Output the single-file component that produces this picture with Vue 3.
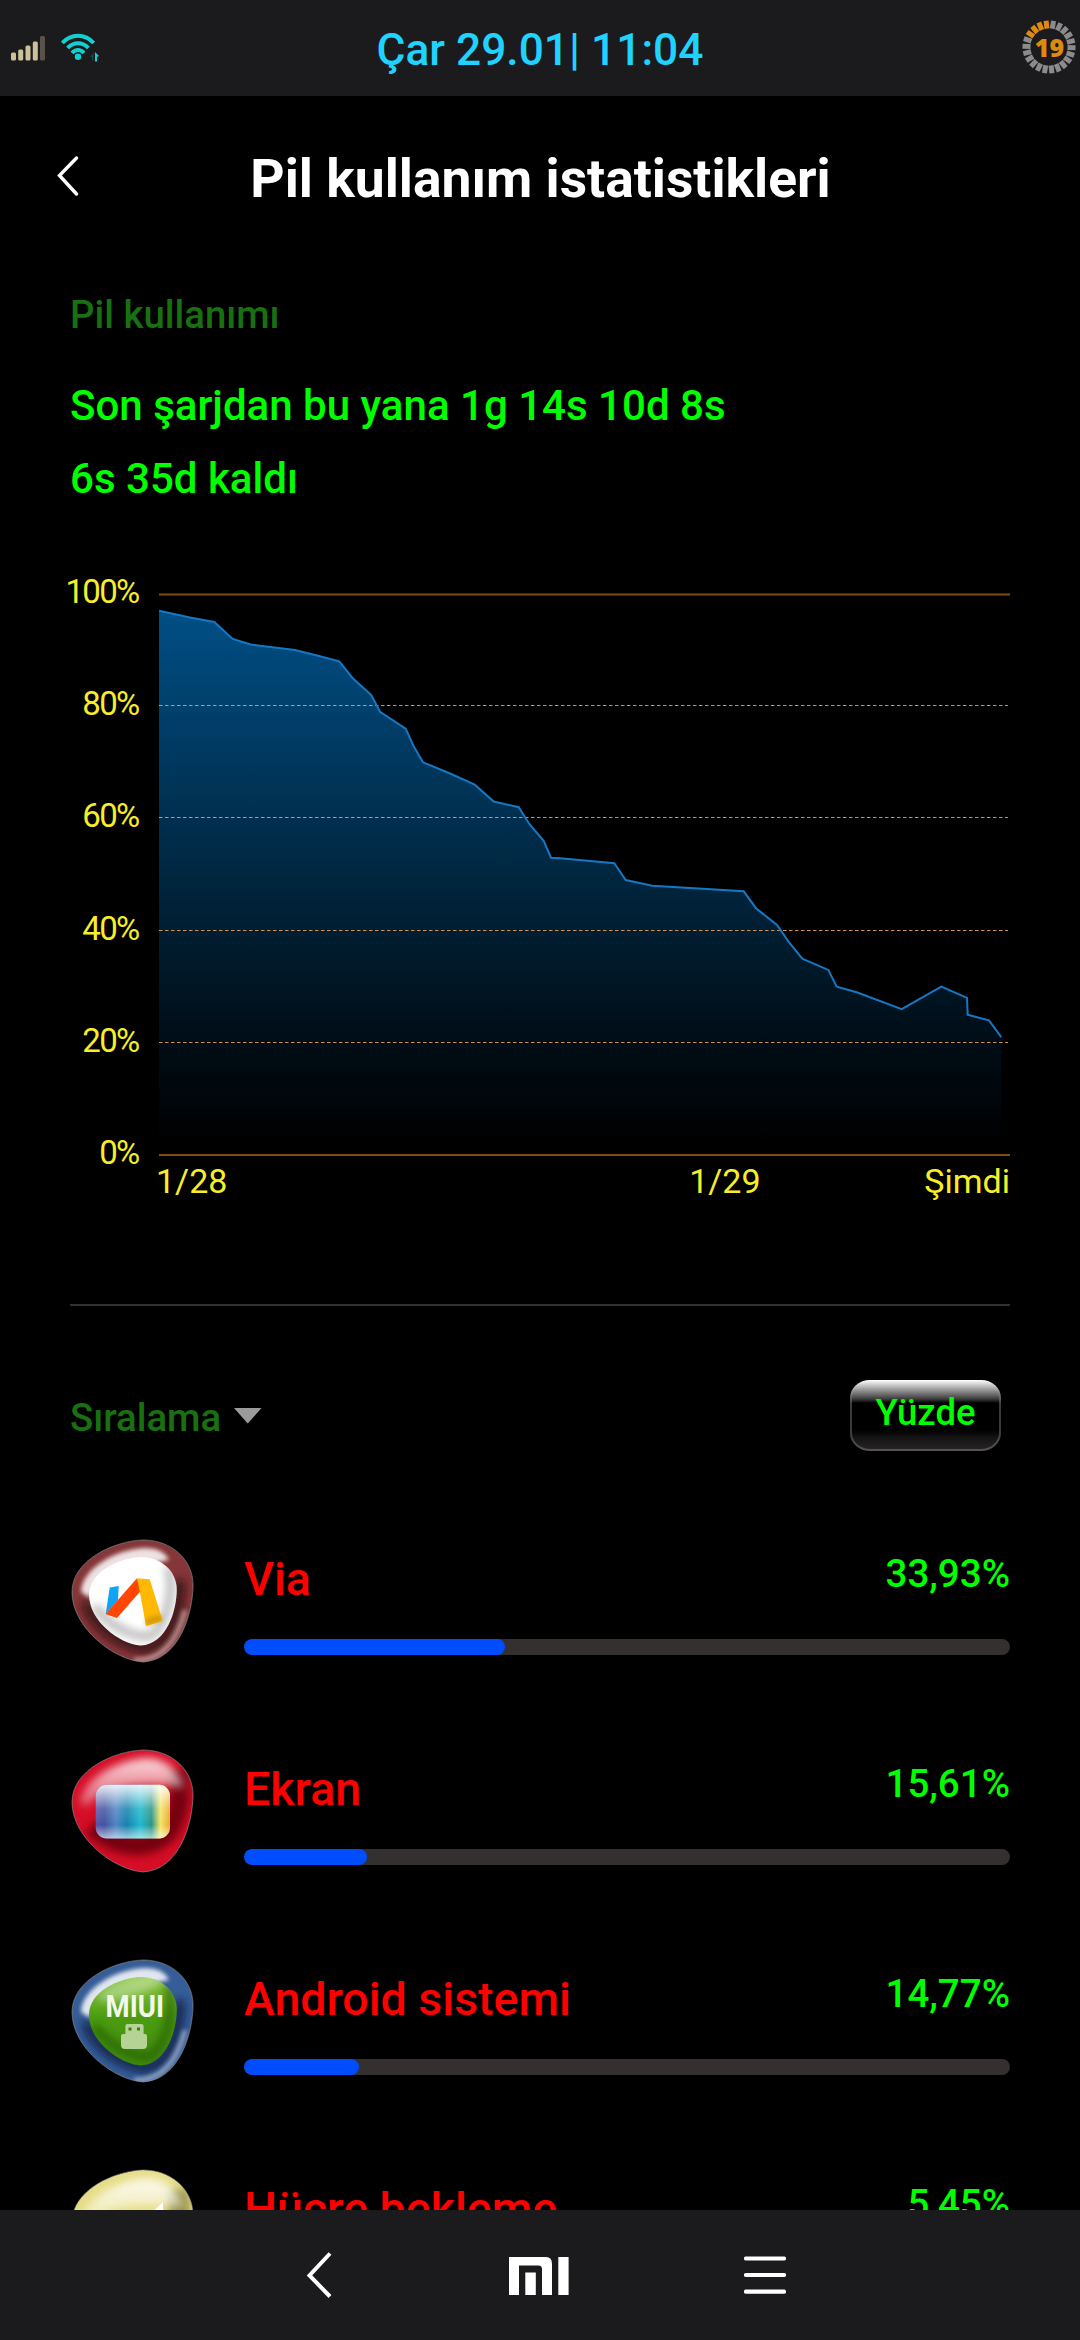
<script setup>
const ticks = Array.from({ length: 22 }, (_, i) => ({
  angle: 10 + (i * 360) / 22,
  on: i >= 18 && i <= 21,
}))

const yLabels = ['100%', '80%', '60%', '40%', '20%', '0%']
const gridLines = [80, 60, 40, 20]

// [x inside the plot, battery level in percent]
const levels = [
  [0, 97], [31, 95.8], [55.3, 95], [73.7, 92], [91.7, 91], [136, 90], [159, 89], [180.3, 88],
  [193.7, 85], [212.3, 82], [221, 79], [246.7, 76], [254.3, 73], [264, 70], [291, 68],
  [315.7, 66], [334.7, 63], [359.7, 62], [370.3, 59], [384.7, 56], [392, 53], [401, 52.9],
  [455.3, 52], [466.7, 49], [493.3, 48], [584.7, 47], [597, 44], [618, 41], [629.7, 38],
  [643.3, 35], [669.3, 33], [677.7, 30], [697.7, 29], [742.7, 26], [782.3, 30], [808, 28],
  [808.7, 25], [830, 24], [842.3, 21],
]
const yOf = (p) => 4 + (100 - p) * 5.61
const line = levels.map(([x, p]) => `${x},${yOf(p).toFixed(1)}`).join(' ')
const area = `0,565 ${line} 842.3,565`

const blob =
  'M71 0C100 0 121 20 121 45C121 72 108 120 71 122C42 120 0 88 0 52C0 20 42 1 71 0Z'

const apps = [
  { id: 'via', name: 'Via', share: '33,93%', fill: 34.1 },
  { id: 'screen', name: 'Ekran', share: '15,61%', fill: 16.1 },
  { id: 'android', name: 'Android sistemi', share: '14,77%', fill: 15 },
  { id: 'cell', name: 'Hücre bekleme', share: '5,45%', fill: 5.5 },
]
</script>

<template>
  <div class="screen">
    <header class="status">
      <div class="status-left">
        <svg class="signal" width="34" height="26" viewBox="0 0 34 26">
          <g fill="#cfc09c">
            <rect x="0" y="17.5" width="5" height="8" rx="1.5" />
            <rect x="7.2" y="14.5" width="5" height="11" rx="1.5" />
            <rect x="14.5" y="10.5" width="5" height="15" rx="1.5" />
            <rect x="21.8" y="6.5" width="5" height="19" rx="1.5" />
          </g>
          <rect x="29" y="1" width="5" height="24.5" rx="1.5" fill="#5a5148" />
        </svg>
        <svg class="wifi" width="40" height="30" viewBox="0 0 40 30">
          <g fill="none" stroke="#14cfd0" stroke-width="4">
            <path d="M1.3 10C10 .3 24 .3 32.7 10" />
            <path d="M6.600 15C12.500 8.500 21.500 8.500 27.400 15" />
            <path d="M11 20C14.600 16 19.400 16 23 20" />
          </g>
          <circle cx="17" cy="23.700" r="3.200" fill="#14cfd0" />
          <path d="M34 19v9.500h2v-4.500l2-1-2-2z" fill="#14cfd0" />
          <path d="M32.500 19v8.500h-1.500v-3l-2-1 2-1.500z" fill="#15474b" />
        </svg>
      </div>
      <div class="clock">Çar 29.01| 11:04</div>
      <svg class="battery" width="56" height="56" viewBox="-28 -28 56 56">
        <rect
          v-for="t in ticks"
          :key="t.angle"
          x="-2.500"
          y="-26.500"
          width="5"
          height="8"
          :fill="t.on ? '#de8a10' : '#8b8b8b'"
          :transform="`rotate(${t.angle})`"
        />
        <text x="0.500" y="9.500" text-anchor="middle" class="battery-text">19</text>
      </svg>
    </header>

    <div class="title-bar">
      <svg class="back" width="24" height="42" viewBox="0 0 24 42">
        <path d="M20.500 3L3.500 20.500L20.500 39" fill="none" stroke="#fff" stroke-width="3.400" stroke-linecap="round" />
      </svg>
      <h1>Pil kullanım istatistikleri</h1>
    </div>

    <main class="content">
      <section class="summary">
        <div class="caption">Pil kullanımı</div>
        <div class="fact">Son şarjdan bu yana 1g 14s 10d 8s</div>
        <div class="fact">6s 35d kaldı</div>
      </section>

      <section class="chart">
        <div class="y-axis">
          <span v-for="l in yLabels" :key="l">{{ l }}</span>
        </div>
        <div class="plot">
          <svg width="851" height="570" viewBox="0 0 851 570">
            <defs>
              <linearGradient id="areaFill" gradientUnits="userSpaceOnUse" x1="0" y1="20" x2="0" y2="555">
                <stop offset="0" stop-color="#004f86" />
                <stop offset="0.500" stop-color="#00263f" />
                <stop offset="0.780" stop-color="#000f1a" />
                <stop offset="1" stop-color="#000" />
              </linearGradient>
            </defs>
            <polygon :points="area" fill="url(#areaFill)" />
            <path d="M0 4.500H851M0 565H851" stroke="#7a4f1c" stroke-width="2" />
            <path
              v-for="g in gridLines"
              :key="g"
              :d="`M0 ${Math.round(yOf(g)) - 0.5}H849`"
              stroke="#e8a050"
              stroke-opacity="0.900"
              stroke-width="1"
              stroke-dasharray="3.500 2.500"
            />
            <polyline :points="line" fill="none" stroke="#1478c4" stroke-width="2" />
          </svg>
          <div class="x-axis">
            <span>1/28</span>
            <span class="mid">1/29</span>
            <span>Şimdi</span>
          </div>
        </div>
      </section>

      <div class="divider"></div>

      <section class="sort">
        <span class="caption">Sıralama</span>
        <svg class="caret" width="28" height="16" viewBox="0 0 28 16">
          <path d="M0 0H27.500L13.700 15.500Z" fill="#9b9b9b" />
        </svg>
        <button class="mode">Yüzde</button>
      </section>

      <section class="apps">
        <article v-for="a in apps" :key="a.id" class="app">
          <svg class="icon" width="122" height="122" viewBox="0 0 122 122">
            <defs>
              <filter id="soft4" x="-30%" y="-30%" width="160%" height="160%"><feGaussianBlur stdDeviation="4" /></filter>
              <filter id="soft2" x="-30%" y="-30%" width="160%" height="160%"><feGaussianBlur stdDeviation="2" /></filter>
              <clipPath id="blobClip"><path :d="blob" /></clipPath>
              <clipPath id="innerClip"><path :d="blob" transform="translate(17 17) scale(.725)" /></clipPath>
              <linearGradient id="spectrum">
                <stop offset="0" stop-color="#5a52a8" />
                <stop offset="0.120" stop-color="#41549e" />
                <stop offset="0.270" stop-color="#4f83c4" />
                <stop offset="0.420" stop-color="#1482ae" />
                <stop offset="0.600" stop-color="#20b8cf" />
                <stop offset="0.750" stop-color="#2c9488" />
                <stop offset="0.870" stop-color="#f1e768" />
                <stop offset="1" stop-color="#f0a52c" />
              </linearGradient>
              <linearGradient id="gloss" x2="0" y2="1">
                <stop offset="0" stop-color="#fff" stop-opacity="0.900" />
                <stop offset="0.450" stop-color="#fff" stop-opacity="0.150" />
                <stop offset="0.750" stop-color="#fff" stop-opacity="0" />
                <stop offset="1" stop-color="#fff" stop-opacity="0.600" />
              </linearGradient>
              <linearGradient id="shine" x2="0" y2="1">
                <stop offset="0" stop-color="#fff" stop-opacity="0.850" />
                <stop offset="1" stop-color="#fff" stop-opacity="0.300" />
              </linearGradient>
              <linearGradient id="green" x2="0" y2="1">
                <stop offset="0" stop-color="#8fc846" />
                <stop offset="0.450" stop-color="#4c9c10" />
                <stop offset="1" stop-color="#3f8a0c" />
              </linearGradient>
            </defs>

            <!-- ringed icons: coloured rim around an inner pebble -->
            <g v-if="a.id === 'via' || a.id === 'android'" clip-path="url(#blobClip)">
              <path :d="blob" :fill="a.id === 'via' ? '#853639' : '#365d98'" />
              <path
                d="M108 40C108 70 98 106 72 108C46 104 20 84 14 62"
                fill="none"
                :stroke="a.id === 'via' ? '#2c0d0f' : '#0b1d40'"
                stroke-width="10"
                opacity="0.850"
                filter="url(#soft4)"
              />
              <path d="M9 52C10 28 45 9 72 8C86 8 93 12 97 20L78 24C48 24 24 34 18 58Z" fill="#fff" opacity="0.850" filter="url(#soft2)" />
              <path d="M62 120C92 122 106 96 113 70" fill="none" stroke="#fff" stroke-width="5" opacity="0.450" filter="url(#soft2)" />
              <path :d="blob" transform="translate(17 17) scale(.725)" :fill="a.id === 'via' ? '#fff' : 'url(#green)'" />
              <g clip-path="url(#innerClip)">
                <path
                  d="M96 26C102 45 98 76 82 94C70 101 40 90 22 66"
                  fill="none"
                  :stroke="a.id === 'via' ? '#9a9a9a' : '#235c06'"
                  stroke-width="8"
                  :opacity="a.id === 'via' ? 0.7 : 0.75"
                  filter="url(#soft4)"
                />
                <ellipse
                  v-if="a.id === 'android'"
                  cx="58"
                  cy="28"
                  rx="34"
                  ry="9"
                  transform="rotate(-18 58 28)"
                  fill="#fff"
                  opacity="0.350"
                  filter="url(#soft4)"
                />
              </g>
            </g>

            <!-- solid glossy icons -->
            <g v-else clip-path="url(#blobClip)">
              <path :d="blob" :fill="a.id === 'screen' ? '#d60d27' : '#e6dc84'" />
              <path
                d="M20 76C44 98 76 102 96 82C106 66 110 50 106 20"
                fill="none"
                :stroke="a.id === 'screen' ? '#6c0610' : '#8a8340'"
                stroke-width="20"
                opacity="0.900"
                filter="url(#soft4)"
              />
              <path
                d="M8 54C10 30 44 10 74 8C92 8 106 18 112 38C84 32 30 34 16 56Z"
                fill="url(#shine)"
                filter="url(#soft4)"
              />
            </g>
            <path :d="blob" fill="none" stroke="#a9a9a9" stroke-opacity="0.550" stroke-width="1" />

            <g v-if="a.id === 'via'">
              <path d="M37.700 47.500L46.700 46L46 60L33.700 74Z" fill="#0fa4f4" />
              <path d="M65 38.300L69.500 50L45 78L33.500 74Z" fill="#ff4605" />
              <path d="M65 38.300L77.700 39.300L90.700 81L74 86L67.500 50Z" fill="#ffb905" />
              <path d="M90.700 81L74 86L73 79L88.500 74Z" fill="#a67802" opacity="0.450" filter="url(#soft2)" />
            </g>
            <g v-if="a.id === 'screen'">
              <rect x="23.700" y="34.700" width="74.300" height="53.700" rx="11" fill="url(#spectrum)" />
              <rect x="23.700" y="34.700" width="74.300" height="53.700" rx="11" fill="url(#gloss)" />
            </g>
            <g v-if="a.id === 'android'">
              <text x="33.500" y="56.700" textLength="58.500" lengthAdjust="spacingAndGlyphs" class="miui">MIUI</text>
              <path
                d="M55.500 64H69.500Q71.600 64 71.600 66V74H73Q75 74 75 76V85Q75 89 71 89H53Q49 89 49 85V76Q49 74 51 74H53.400V66Q53.400 64 55.500 64Z"
                fill="#b4d394"
              />
              <path d="M56.500 67.500h3v3h-3zM65 67.500h3v3h-3z" fill="#3d7a16" />
            </g>
            <path v-if="a.id === 'cell'" d="M91 32L76 46L91 60Z" fill="#fff" />
          </svg>
          <div class="info">
            <div class="row">
              <span class="name">{{ a.name }}</span>
              <span class="share">{{ a.share }}</span>
            </div>
            <div class="track"><div class="fill" :style="{ width: a.fill + '%' }"></div></div>
          </div>
        </article>
      </section>
    </main>

    <nav class="nav">
      <svg class="nav-back" width="27" height="48" viewBox="0 0 27 48">
        <path d="M24 2.500L3.500 24.500L24 45.500" fill="none" stroke="#fff" stroke-width="4" />
      </svg>
      <svg class="nav-mi" width="60" height="38" viewBox="0 0 60 38">
        <path d="M0 0H37Q43 0 43 7V38H33V12Q33 8.500 29.500 8.500H10V38H0Z" fill="#fff" />
        <path d="M16.300 15.500H26.800V38H16.300ZM49.300 0H59.600V38H49.300Z" fill="#fff" />
      </svg>
      <svg width="42" height="40" viewBox="0 0 42 40">
        <path d="M2 3.500H40M2 20H40M2 36.700H40" stroke="#fff" stroke-width="4.200" stroke-linecap="round" />
      </svg>
    </nav>
  </div>
</template>

<style>
body {
  background: #000;
}
</style>

<style scoped>
.screen {
  width: 1080px;
  height: 2340px;
  display: flex;
  flex-direction: column;
  overflow: hidden;
  background: #000;
  font-family: Roboto, sans-serif;
  font-weight: 500;
}
.status {
  height: 96px;
  flex: none;
  display: grid;
  grid-template-columns: 1fr auto 1fr;
  background: #1b1b1d;
}
.status-left {
  display: flex;
  align-items: flex-start;
  padding-left: 11px;
}
.signal {
  margin-top: 35px;
}
.wifi {
  margin: 33px 0 0 16px;
}
.clock {
  color: #1fd2ff;
  font-size: 44.300px;
  line-height: 100px;
}
.battery {
  justify-self: end;
  margin: 19px 3px 0 0;
}
.battery-text {
  font: 800 25px 'Open Sans', sans-serif;
  fill: #de8a10;
}
.title-bar {
  height: 164px;
  flex: none;
  display: grid;
  grid-template-columns: 80px 1fr 80px;
}
.back {
  margin: 59px 0 0 56px;
}
h1 {
  margin: 0;
  padding-left: 1px;
  text-align: center;
  color: #fff;
  font-size: 53.400px;
  font-weight: 700;
  line-height: 166px;
}
.content {
  flex: 1;
  min-height: 0;
  overflow: hidden;
  padding: 0 70px;
}
.summary {
  padding-top: 30px;
}
.caption {
  color: #197011;
  font-size: 38.300px;
  line-height: 50px;
}
.fact {
  color: #00ff00;
  font-size: 42.050px;
  line-height: 73px;
}
.summary .caption {
  margin-bottom: 29px;
}
.chart {
  display: flex;
  margin-top: 57px;
  color: #f8ee28;
  font-size: 33px;
  font-weight: 400;
  line-height: 40px;
}
.y-axis {
  width: 68.500px;
  height: 601px;
  display: flex;
  flex-direction: column;
  justify-content: space-between;
  align-items: flex-end;
  letter-spacing: -1.700px;
}
.plot {
  width: 851px;
  margin: 18px 0 0 20.500px;
}
.plot svg {
  display: block;
}
.x-axis {
  display: flex;
  justify-content: space-between;
  margin: 1px 0 0 -3px;
  font-size: 34px;
}
.x-axis .mid {
  margin-left: 298px;
}
.divider {
  height: 2px;
  margin-top: 103px;
  background: #343131;
}
.sort {
  height: 190px;
  display: flex;
  align-items: flex-start;
}
.sort .caption {
  margin-top: 87px;
}
.caret {
  margin: 102px 0 0 13px;
}
.mode {
  box-sizing: border-box;
  width: 151px;
  height: 71px;
  margin: 74px 9px 0 auto;
  padding: 0 0 6px;
  border: 2px solid transparent;
  border-radius: 20px / 18px;
  background:
    linear-gradient(#e9e9e9 0, #8d8d8d 9px, #3c3c3c 17px, #000 21px, #000 48px, #151516 56px, #262323 100%) padding-box,
    linear-gradient(#fff 0, #8a8a8a 12px, #3a3a3a 24px, #3a3a3a 50px, #555353 100%) border-box;
  color: #00ff00;
  font: 500 36.500px Roboto, sans-serif;
}
.app {
  height: 210px;
  display: flex;
  align-items: flex-start;
}
.icon {
  flex: none;
  margin: 44px 50px 0 2px;
  overflow: visible;
}
.info {
  flex: 1;
  padding-top: 53px;
}
.row {
  display: flex;
  justify-content: space-between;
  line-height: 60px;
}
.name {
  color: #ff0000;
  font-size: 46.500px;
}
.share {
  margin-top: -5px;
  color: #00ff00;
  font-size: 38.500px;
}
.track {
  height: 16px;
  margin-top: 30px;
  border-radius: 8px;
  background: #343030;
  overflow: hidden;
}
.fill {
  height: 100%;
  border-radius: 8px;
  background: #004dff;
}
.miui {
  font: 700 31.500px Roboto, sans-serif;
  fill: #f3f8ec;
}
.nav {
  height: 130px;
  flex: none;
  display: flex;
  align-items: center;
  padding-left: 306px;
  box-sizing: border-box;
  background: #1b1b1d;
}
.nav-back {
  margin-right: 176px;
}
.nav-mi {
  margin: 2px 175px 0 0;
}
</style>
